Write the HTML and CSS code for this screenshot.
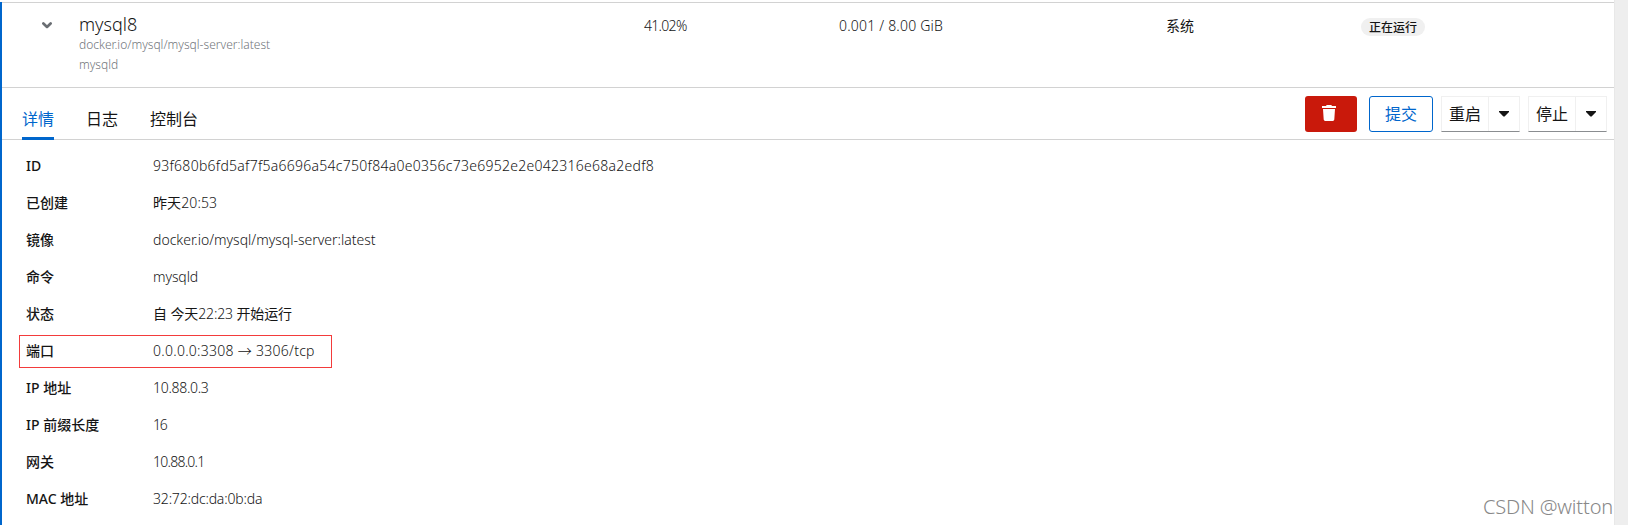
FILE: index.html
```html
<!DOCTYPE html>
<html lang="zh-CN">
<head>
<meta charset="utf-8">
<title>mysql8</title>
<link rel="stylesheet" href="styles.css">
</head>
<body>
<main class="panel">
  <header class="summary">
    <svg class="chevron" width="10" height="7" viewBox="0 0 10 7"><path d="M1.4 1.500 5 4.900 8.600 1.500" fill="none" stroke="#6a6e73" stroke-width="2.700" stroke-linecap="round" stroke-linejoin="round"/></svg>
    <div class="container-name">
      <div class="name">mysql8</div>
      <div class="sub image">docker.io/mysql/mysql-server:latest</div>
      <div class="sub">mysqld</div>
    </div>
    <div class="cell cpu">41.02%</div>
    <div class="cell memory">0.001 / 8.00 GiB</div>
    <div class="cell owner">系统</div>
    <div class="cell status"><span class="badge">正在运行</span></div>
  </header>
  <nav class="toolbar">
    <div class="tabs">
      <a class="tab active">详情</a>
      <a class="tab">日志</a>
      <a class="tab">控制台</a>
    </div>
    <div class="actions">
      <button class="btn danger"><svg width="14" height="16" viewBox="0 0 14 16"><path d="M0 1h4l.7-1h4.600l.7 1h4v2H0zM1 4h12l-.7 10.600q-.1 1.400-1.500 1.400H3.200q-1.400 0-1.500-1.400z" fill="#fff"/></svg></button>
      <button class="btn secondary">提交</button>
      <div class="split"><button class="split-main">重启</button><button class="split-toggle"><svg width="10" height="6" viewBox="0 0 10 6"><path d="M0 0h10v1L5.600 5.600h-1.200L0 1z" fill="#151515"/></svg></button></div>
      <div class="split"><button class="split-main">停止</button><button class="split-toggle"><svg width="10" height="6" viewBox="0 0 10 6"><path d="M0 0h10v1L5.600 5.600h-1.200L0 1z" fill="#151515"/></svg></button></div>
    </div>
  </nav>
  <dl class="details">
    <div class="row"><dt>ID</dt><dd class="hash">93f680b6fd5af7f5a6696a54c750f84a0e0356c73e6952e2e042316e68a2edf8</dd></div>
    <div class="row"><dt>已创建</dt><dd class="created"><span class="zh">昨天</span>20:53</dd></div>
    <div class="row"><dt>镜像</dt><dd>docker.io/mysql/mysql-server:latest</dd></div>
    <div class="row"><dt>命令</dt><dd class="command">mysqld</dd></div>
    <div class="row"><dt>状态</dt><dd class="state"><span class="zh">自 今天</span>22:23 <span class="zh">开始运行</span></dd></div>
    <div class="row marked"><dt>端口</dt><dd class="ports">0.0.0.0:3308 → 3306/tcp</dd></div>
    <div class="row"><dt>IP 地址</dt><dd class="ip">10.88.0.3</dd></div>
    <div class="row"><dt>IP 前缀长度</dt><dd class="prefix">16</dd></div>
    <div class="row"><dt>网关</dt><dd class="gateway">10.88.0.1</dd></div>
    <div class="row"><dt>MAC 地址</dt><dd class="mac">32:72:dc:da:0b:da</dd></div>
  </dl>
</main>
<div class="watermark">CSDN @witton</div>
</body>
</html>
```
FILE: styles.css
```css
* { box-sizing: border-box; }
body {
  margin: 0;
  height: 525px;
  overflow: hidden;
  padding-top: 2px;
  background: #fff;
  display: flex;
  color: #151515;
  font: 300 14px/21px "Noto Sans", "Noto Sans CJK SC", sans-serif;
  position: relative;
}
body::after {
  content: "";
  flex: 0 0 13px;
  margin-top: -2px;
  background: #eee;
  border-left: 1px solid #e8e8e8;
}
.panel { flex: 1; border-left: 2px solid #06c; }
.summary {
  height: 86px;
  border-top: 1px solid #d2d2d2;
  border-bottom: 1px solid #d2d2d2;
  display: grid;
  grid-template-columns: 37px 565px 195px 327px 195px 1fr;
  padding-left: 40px;
}
.chevron { margin-top: 19px; }
.name { margin: 8px 0 -3px; font-size: 18px; line-height: 27px; font-weight: 350; }
.sub { font-size: 12px; line-height: 20px; color: #72767b; }
.image { letter-spacing: 0.01px; }
.cell { padding-top: 12px; }
.status { padding-top: 13px; }
.cpu { letter-spacing: -0.7px; }
.memory { letter-spacing: 0.2px; }
.owner, .zh { font-weight: 400; }
.badge {
  display: block;
  width: 64px;
  height: 18px;
  margin-top: 2px;
  border-radius: 9px;
  background: #f0f0f0;
  font: 500 12px/17px "Noto Sans CJK SC", sans-serif;
  text-align: center;
}
.toolbar {
  height: 52px;
  border-bottom: 1px solid #d2d2d2;
  padding: 8px 7px 0 20px;
  display: flex;
  justify-content: space-between;
}
.tabs { display: flex; gap: 32px; height: 44px; }
.tab {
  height: 44px;
  padding-top: 10px;
  font: 400 16px/24px "Noto Sans CJK SC", sans-serif;
}
.tab.active { color: #06c; border-bottom: 3px solid #06c; }
.actions { display: flex; height: 36px; }
button {
  margin: 0;
  padding: 0 0 2px;
  border: 0;
  background: none;
  color: #151515;
  font: 400 16px/24px "Noto Sans CJK SC", sans-serif;
  display: flex;
  align-items: center;
  justify-content: center;
}
.btn { height: 36px; border-radius: 3px; }
.danger { width: 52px; background: #c9190b; margin-right: 12px; padding-right: 4px; }
.secondary { width: 64px; border: 1px solid #06c; color: #06c; }
.split {
  width: 79px;
  margin-left: 8px;
  border: 1px solid #f0f0f0;
  border-bottom-color: #8a8d90;
  display: flex;
}
.split-main { width: 47px; border-right: 1px solid #f0f0f0; }
.split-toggle { flex: 1; padding-bottom: 0; }
.details { margin: 0; padding: 7px 0 0 17px; }
.row { height: 37px; display: grid; grid-template-columns: 127px auto; align-items: center; padding-left: 7px; }
dt { font-weight: 500; }
dd { margin: 0; }
.hash { letter-spacing: 0.265px; }
.created { letter-spacing: 0.1px; }
.command { letter-spacing: -0.1px; }
.state { letter-spacing: -0.12px; }
.ports { letter-spacing: 0.27px; }
.ip { letter-spacing: -0.3px; }
.prefix { letter-spacing: -1.200px; }
.gateway { letter-spacing: -0.75px; }
.mac { letter-spacing: -0.18px; }
.marked { width: 313px; height: 33px; margin: 3px 0 1px; border: 1px solid #f33b3b; padding: 0 0 2px 6px; }
.watermark {
  position: absolute;
  left: 1483px;
  top: 493px;
  font-size: 20px;
  line-height: 28px;
  letter-spacing: -0.15px;
  color: #888;
}
```
